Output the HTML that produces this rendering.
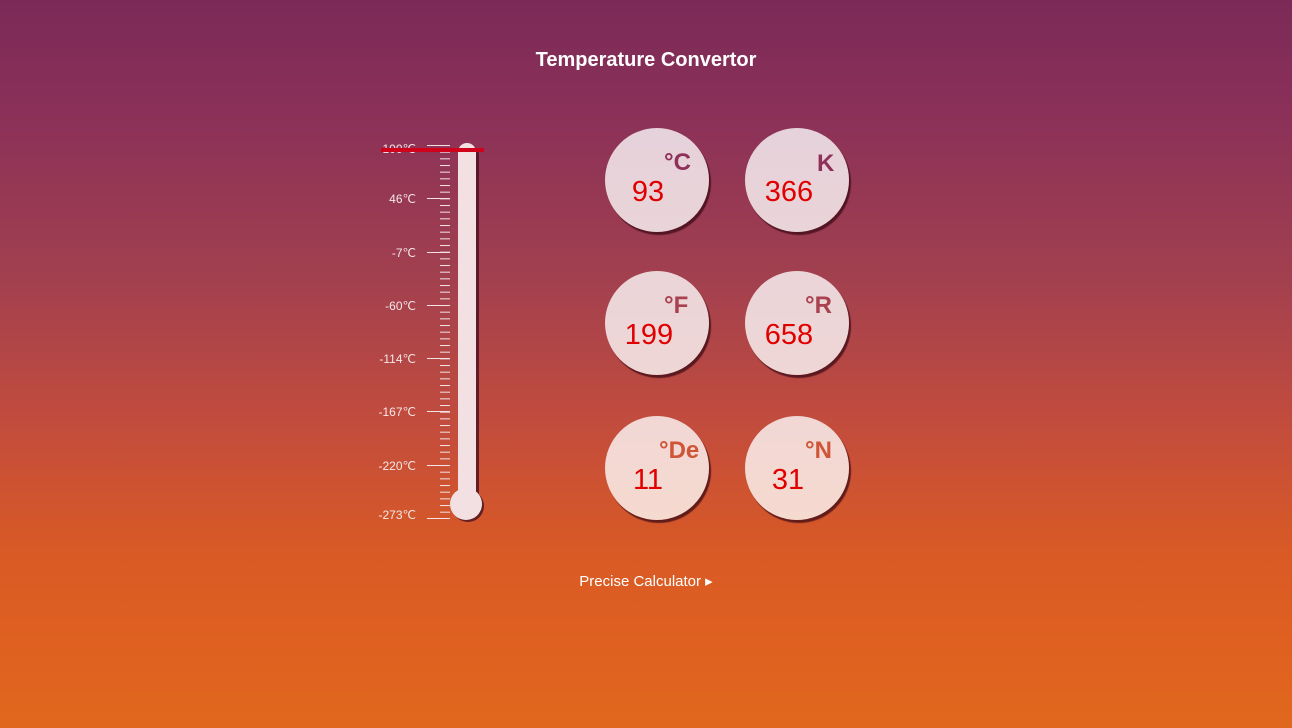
<!DOCTYPE html>
<html><head><meta charset="utf-8"><style>
html,body{margin:0;padding:0}
body{width:1292px;height:728px;overflow:hidden;position:relative;font-family:"Liberation Sans",sans-serif;
background:linear-gradient(to bottom,#7b2a57 0%,#8a3059 15%,#a2404f 38%,#c24c3d 58%,#d95a25 76%,#df6020 88%,#e0681e 100%);}
.t{position:absolute;left:0;width:1292px;text-align:center;top:49px;color:#fff;font-weight:bold;font-size:20px}
.c{position:absolute;width:104px;height:104px;border-radius:50%;background:rgba(255,255,255,0.78);box-shadow:2px 3px 1px rgba(60,10,20,0.75)}
.n{position:absolute;width:80px;text-align:center;color:#e00000;font-size:29px}
.u{position:absolute;font-weight:bold;font-size:24px}
.p{position:absolute;left:0;width:1292px;text-align:center;top:572px;color:#fff;font-size:15px}
</style></head><body>
<div class="t">Temperature Convertor</div>
<svg style="position:absolute;left:0;top:0" width="1292" height="728">
<defs><pattern id="mt" x="0" y="145" width="20" height="6.667" patternUnits="userSpaceOnUse"><line x1="0" y1="0.5" x2="12" y2="0.5" stroke="#f3e3e6" stroke-width="1"/></pattern></defs>
<rect x="438" y="145" width="12" height="374" fill="url(#mt)"/>
<g stroke="#f3e3e6" stroke-width="1">
<line x1="427" y1="145.5" x2="450" y2="145.5"/><line x1="427" y1="198.5" x2="450" y2="198.5"/>
<line x1="427" y1="252.5" x2="450" y2="252.5"/><line x1="427" y1="305.5" x2="450" y2="305.5"/>
<line x1="427" y1="358.5" x2="450" y2="358.5"/><line x1="427" y1="411.5" x2="450" y2="411.5"/>
<line x1="427" y1="465.5" x2="450" y2="465.5"/><line x1="427" y1="518.5" x2="450" y2="518.5"/>
</g>
<g fill="#f5e8ea" font-size="12" text-anchor="end" font-family="Liberation Sans,sans-serif">
<text x="416" y="153">100℃</text><text x="416" y="203">46℃</text><text x="416" y="257">-7℃</text>
<text x="416" y="310">-60℃</text><text x="416" y="363">-114℃</text><text x="416" y="416">-167℃</text>
<text x="416" y="470">-220℃</text><text x="416" y="519">-273℃</text>
</g>
<g fill="#4a1220" opacity="0.8">
<rect x="460" y="146" width="19" height="360" rx="9"/><circle cx="468" cy="506" r="16"/>
</g>
<g fill="#f2e0e2">
<rect x="458" y="143" width="18" height="360" rx="9"/><circle cx="466" cy="504" r="16"/>
</g>
<rect x="381" y="148" width="103" height="4" fill="#d0021b"/>
</svg>
<div class="c" style="left:605px;top:128px"></div><div class="c" style="left:745px;top:128px"></div>
<div class="c" style="left:605px;top:271px"></div><div class="c" style="left:745px;top:271px"></div>
<div class="c" style="left:605px;top:416px"></div><div class="c" style="left:745px;top:416px"></div>
<div class="n" style="left:608px;top:176px">93</div><div class="n" style="left:749px;top:176px">366</div>
<div class="n" style="left:609px;top:319px">199</div><div class="n" style="left:749px;top:319px">658</div>
<div class="n" style="left:608px;top:464px">11</div><div class="n" style="left:748px;top:464px">31</div>
<div class="u" style="left:664px;top:149px;color:#8e3058">°C</div><div class="u" style="left:817px;top:150px;color:#8e3058">K</div>
<div class="u" style="left:664px;top:292px;color:#a94250">°F</div><div class="u" style="left:805px;top:292px;color:#a94250">°R</div>
<div class="u" style="left:659px;top:437px;color:#cf5538">°De</div><div class="u" style="left:805px;top:437px;color:#cf5538">°N</div>
<div class="p">Precise Calculator ▸</div>
</body></html>
